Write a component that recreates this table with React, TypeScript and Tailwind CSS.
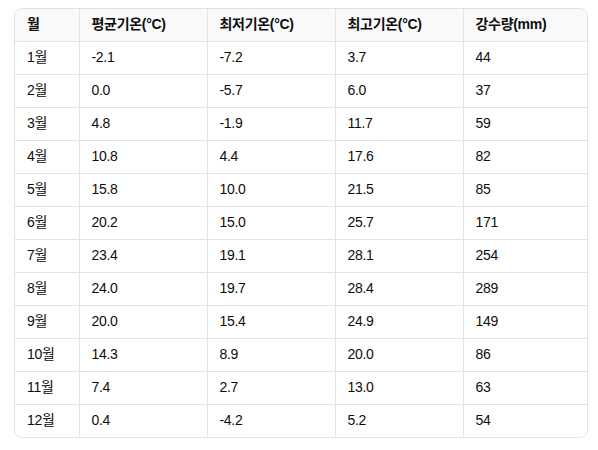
const header = ['월', '평균기온(°C)', '최저기온(°C)', '최고기온(°C)', '강수량(mm)'];

const rows = [
  ['1월', '-2.1', '-7.2', '3.7', '44'],
  ['2월', '0.0', '-5.7', '6.0', '37'],
  ['3월', '4.8', '-1.9', '11.7', '59'],
  ['4월', '10.8', '4.4', '17.6', '82'],
  ['5월', '15.8', '10.0', '21.5', '85'],
  ['6월', '20.2', '15.0', '25.7', '171'],
  ['7월', '23.4', '19.1', '28.1', '254'],
  ['8월', '24.0', '19.7', '28.4', '289'],
  ['9월', '20.0', '15.4', '24.9', '149'],
  ['10월', '14.3', '8.9', '20.0', '86'],
  ['11월', '7.4', '2.7', '13.0', '63'],
  ['12월', '0.4', '-4.2', '5.2', '54'],
];

const widths = ['w-[64px]', 'w-[128px]', 'w-[128px]', 'w-[128px]', 'w-[124px]'];

export default function App() {
  return (
    <div
      className="min-h-screen bg-white pt-[8px] pl-[14px]"
      style={{ fontFamily: '"Liberation Sans", "Noto Sans CJK KR", sans-serif' }}
    >
      <div className="w-[574px] overflow-hidden rounded-lg border border-[#e3e3e3] text-[14px] tracking-[-0.3px] text-[#0d0d0d]">
        <table className="w-full table-fixed border-collapse">
          <thead>
            <tr className="h-[32px] bg-[#f9f9f9]">
              {header.map((h, i) => (
                <th
                  key={h}
                  className={`${widths[i]} px-3 text-left font-semibold ${i > 0 ? 'border-l border-[#e3e3e3]' : ''}`}
                >
                  {h}
                </th>
              ))}
            </tr>
          </thead>
          <tbody>
            {rows.map((r) => (
              <tr key={r[0]} className="h-[33px] border-t border-[#e3e3e3]">
                {r.map((c, i) => (
                  <td key={i} className={`px-3 ${i > 0 ? 'border-l border-[#e3e3e3]' : ''}`}>
                    {c}
                  </td>
                ))}
              </tr>
            ))}
          </tbody>
        </table>
      </div>
    </div>
  );
}
